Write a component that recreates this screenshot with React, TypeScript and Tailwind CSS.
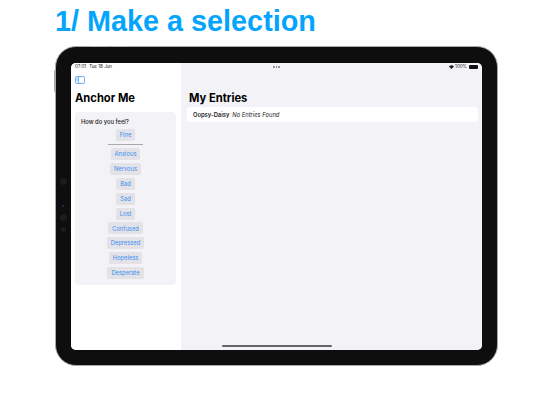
const moods = ["Anxious", "Nervous", "Bad", "Sad", "Lost", "Confused", "Depressed", "Hopeless", "Desperate"];

const ui = { fontFamily: "Inter, sans-serif" };

function MoodButton({ label }: { label: string }) {
  return (
    <div className="flex h-[12px] items-center rounded-[2px] bg-[#e2e2e7] px-[4px] text-[5.8px] leading-none text-[#3d8ff2]">
      {label}
    </div>
  );
}

function SidebarIcon() {
  return (
    <svg width="10" height="8" viewBox="0 0 10 8" fill="none" stroke="#3d92f5" strokeWidth="0.8" className="block">
      <rect x="0.4" y="0.6" width="9.2" height="6.8" rx="1" />
      <path d="M3.4 0.6v6.8" />
      <path d="M1.2 2h1.4M1.2 3.2h1.4M1.2 4.4h1.4" strokeWidth="0.5" />
    </svg>
  );
}

function StatusRight() {
  return (
    <div className="flex items-center gap-[1.5px] text-[4.5px] leading-none text-[#222]">
      <svg width="5" height="4" viewBox="0 0 5 4" fill="#222">
        <path d="M0 1.4C1.4 0 3.6 0 5 1.4L2.5 4z" />
      </svg>
      <span>100%</span>
      <span className="ml-[0.5px] h-[3.5px] w-[9px] rounded-[1px] bg-[#111]" />
    </div>
  );
}

export default function App() {
  return (
    <div className="flex h-[414px] w-[552px] flex-col overflow-hidden bg-white">
      <h1
        className="ml-[55px] mt-[5px] h-[36px] text-[28.8px] font-bold leading-[33px] text-[#03a5fc]"
        style={{ fontFamily: "'Liberation Sans', sans-serif" }}
      >
        1/ Make a selection
      </h1>

      <div className="relative ml-[55px] mt-[5px] h-[320px] w-[443px] rounded-[21px] border border-[#a9a9ad] bg-[#0e0e0e] px-[15px] pt-[16px]">
        <span className="absolute left-[34px] top-[-1.5px] h-[1px] w-[17px] rounded-t-[1px] bg-[#b5b5b9]" />
        <span className="absolute left-[56px] top-[-1.5px] h-[1px] w-[17px] rounded-t-[1px] bg-[#b5b5b9]" />
        <span className="absolute left-[-2px] top-[23px] h-[22px] w-[1.5px] rounded-l-[1px] bg-[#a9a9ad]" />
        <span className="absolute left-[3.5px] top-[131px] h-[7px] w-[7px] rounded-full bg-[#1c1c1c]" />
        <span className="absolute left-[6px] top-[158px] h-[2px] w-[2px] rounded-full bg-[#1f3a66]" />
        <span className="absolute left-[3.5px] top-[167px] h-[7px] w-[7px] rounded-full bg-[#1c1c1c]" />
        <span className="absolute left-[4.5px] top-[180px] h-[5px] w-[5px] rounded-full bg-[#1c1c1c]" />

        <div className="relative flex h-[287px] w-[411px] overflow-hidden rounded-[5px] bg-white text-black" style={ui}>
          <aside className="flex w-[110px] shrink-0 flex-col bg-white px-[4px]">
            <div className="flex h-[6px] items-end gap-[3px] text-[4.5px] leading-none text-[#222]">
              <span>07:01</span>
              <span>Tue 18 Jun</span>
            </div>
            <div className="mt-[7px]">
              <SidebarIcon />
            </div>
            <h2 className="mt-[5.5px] text-[11.2px] font-bold leading-[16px]">Anchor Me</h2>
            <div className="mt-[6.5px] flex h-[173px] w-[101px] flex-col rounded-[4px] bg-[#f2f2f7] pt-[6px]">
              <p className="pl-[6px] text-[5.8px] font-medium leading-[8px] text-[#1a1a1a]">How do you feel?</p>
              <div className="mt-[3px] flex flex-col items-center">
                <MoodButton label="Fine" />
                <div className="mt-[3px] h-[1px] w-[35px] bg-[#a9a9ae]" />
                <div className="mt-[3px] flex flex-col items-center gap-[2.9px]">
                  {moods.map((mood) => (
                    <MoodButton key={mood} label={mood} />
                  ))}
                </div>
              </div>
            </div>
          </aside>

          <main className="flex min-w-0 flex-1 flex-col bg-[#f2f2f7] pl-[6px] pr-[4px]">
            <div className="flex h-[6px] items-end justify-end">
              <StatusRight />
            </div>
            <h2 className="ml-[2px] mt-[20.5px] text-[11.2px] font-bold leading-[16px]">My Entries</h2>
            <div className="mt-[1.5px] flex h-[15px] items-center gap-[3px] rounded-[3px] bg-white pl-[6px] text-[5.8px] leading-none text-[#1a1a1a]">
              <span className="font-semibold">Oopsy-Daisy</span>
              <span className="italic">No Entries Found</span>
            </div>
          </main>

          <div className="absolute left-[202px] top-[3px] flex gap-[1px]">
            <span className="h-[1.5px] w-[1.5px] rounded-full bg-[#777]" />
            <span className="h-[1.5px] w-[1.5px] rounded-full bg-[#777]" />
            <span className="h-[1.5px] w-[1.5px] rounded-full bg-[#777]" />
          </div>
          <div className="absolute bottom-[3px] left-[151px] h-[2px] w-[110px] rounded-full bg-[#666]" />
        </div>
      </div>
    </div>
  );
}
